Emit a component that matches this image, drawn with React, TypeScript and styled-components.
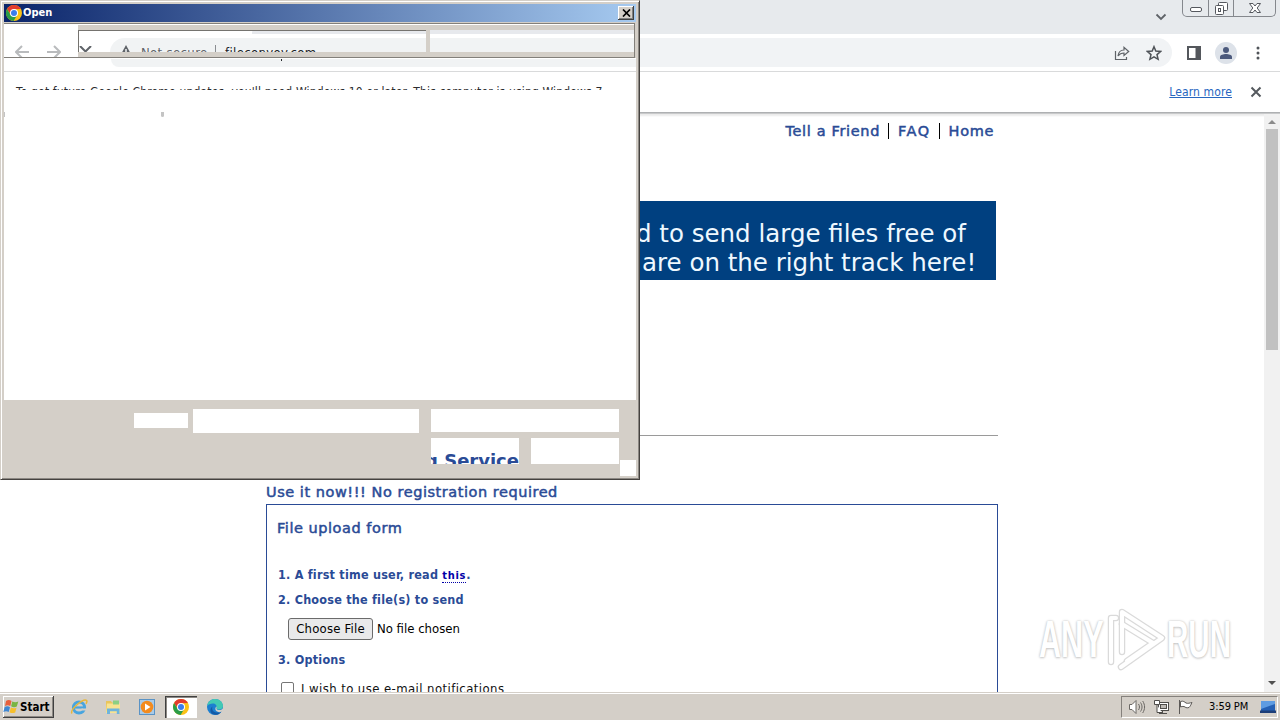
import styled, { createGlobalStyle } from "styled-components";

const FACE = "#d4cfc8";
const INK = "#2a4b96";

function ChromeLogo({ size }: { size: number }) {
  return (
    <svg width={size} height={size} viewBox="0 0 16 16">
      <circle cx="8" cy="8" r="8" fill="#fbc116" />
      <path d="M1.07 4A8 8 0 0 1 14.93 4L8 4.2 5 9.8Z" fill="#e33b2e" />
      <path d="M1.07 4A8 8 0 0 0 7.6 16L11.2 10 8 11.6 4.7 10Z" fill="#2a9d48" />
      <circle cx="8" cy="8" r="4" fill="#fff" />
      <circle cx="8" cy="8" r="3" fill="#3b7ded" />
    </svg>
  );
}

function TabStrip() {
  return (
    <TabStripStyle>
      <svg className="search" width="12" height="8" viewBox="0 0 12 8" fill="none" stroke="#5f6368" strokeWidth="1.8">
        <path d="M1.5 1.5 6 6l4.5-4.5" />
      </svg>
      <WindowButtons>
        <span>
          <svg width="14" height="16" viewBox="0 0 14 16" fill="#fff" stroke="#55585e">
            <rect x="1.5" y="7.5" width="11" height="4" rx="1.5" />
          </svg>
        </span>
        <span>
          <svg width="14" height="16" viewBox="0 0 14 16" fill="#fff" stroke="#55585e">
            <rect x="4.5" y="2.5" width="9" height="8" rx="1" />
            <rect x="1.5" y="5.5" width="8" height="9" rx="1" />
            <rect x="4.5" y="8.5" width="2" height="3" />
          </svg>
        </span>
        <span>
          <svg width="14" height="16" viewBox="0 0 14 16" fill="#fff" stroke="#55585e">
            <path d="M1.5 3.5h3.5L7 6l2-2.5h3.5L9.2 8l3.3 4.5H9L7 10l-2 2.5H1.5L4.8 8Z" />
          </svg>
        </span>
      </WindowButtons>
    </TabStripStyle>
  );
}

function Toolbar() {
  return (
    <ToolbarStyle>
      <Omnibox>
        <svg width="16" height="16" viewBox="0 0 16 16" fill="none" stroke="#5f6368" strokeWidth="1.2">
          <path d="M1.5 6v8.5h11V12" />
          <path d="M4 11c.5-4 2.5-6 6-6V2.3L14.7 6.5 10 10.5V8C7.5 8 5.6 8.8 4 11Z" />
        </svg>
        <svg width="16" height="16" viewBox="0 0 16 16" fill="none" stroke="#4f5358" strokeWidth="1.5">
          <path d="m8 1.7 1.8 4.4 4.7.4L11 9.6l1.1 4.7L8 11.8l-4.1 2.5L5 9.6 1.5 6.5l4.7-.4Z" />
        </svg>
      </Omnibox>
      <svg width="14" height="14" viewBox="0 0 14 14">
        <rect x="1" y="1" width="12" height="12" fill="#fff" stroke="#54575c" strokeWidth="2" />
        <path d="M8.5 1H13v12H8.5Z" fill="#54575c" />
      </svg>
      <Avatar>
        <svg width="12" height="12" viewBox="0 0 12 12" fill="#4c5a7d">
          <circle cx="6" cy="3" r="3" />
          <path d="M0 12V9.8C0 8 3.5 7 6 7s6 1 6 2.8V12Z" />
        </svg>
      </Avatar>
      <svg width="4" height="14" viewBox="0 0 4 14" fill="#505459">
        <circle cx="2" cy="2" r="1.5" />
        <circle cx="2" cy="7" r="1.5" />
        <circle cx="2" cy="12" r="1.5" />
      </svg>
    </ToolbarStyle>
  );
}

function Page() {
  return (
    <PageStyle>
      <Content>
        <Nav>
          <span>Tell a Friend</span>
          <span>FAQ</span>
          <span>Home</span>
        </Nav>
        <Banner>
          <p>d to send large files free of</p>
          <p>are on the right track here!</p>
        </Banner>
        <Rule />
        <Heading>Use it now!!! No registration required</Heading>
        <Form>
          <Heading as="h3">File upload form</Heading>
          <Step $top={27}>
            1. A first time user, read <a>this</a>.
          </Step>
          <Step $top={5}>2. Choose the file(s) to send</Step>
          <FileRow>
            <button>Choose File</button>
            <span>No file chosen</span>
          </FileRow>
          <Step $top={10}>3. Options</Step>
          <CheckRow>
            <i />
            <span>I wish to use e-mail notifications</span>
          </CheckRow>
        </Form>
      </Content>
      <Scrollbar>
        <svg width="8" height="4" viewBox="0 0 8 4" fill="#8b8b8b">
          <path d="M0 4 4 0l4 4Z" />
        </svg>
        <div />
        <svg width="8" height="4" viewBox="0 0 8 4" fill="#505050">
          <path d="M0 0h8L4 4Z" />
        </svg>
      </Scrollbar>
    </PageStyle>
  );
}

function OpenDialog() {
  return (
    <Dialog>
      <TitleBar>
        <ChromeLogo size={16} />
        <strong>Open</strong>
        <CloseButton>
          <svg width="9" height="8" viewBox="0 0 9 8" stroke="#000" strokeWidth="1.7">
            <path d="m1 .5 7 7M8 .5l-7 7" />
          </svg>
        </CloseButton>
      </TitleBar>
      <Rebar>
        <Arrows>
          <svg width="14" height="14" viewBox="0 0 14 14">
            <path d="M14 7H1.5M7 1 1 7l6 6" />
          </svg>
          <svg width="14" height="14" viewBox="0 0 14 14">
            <path d="M0 7h12.5M7 1l6 6-6 6" />
          </svg>
        </Arrows>
        <AddressBand>
          <svg width="13" height="8" viewBox="0 0 13 8" fill="none" stroke="#5f6368" strokeWidth="2">
            <path d="m1 0 5.5 5.5L12 0" />
          </svg>
          <AddressPill>
            <svg width="12" height="11" viewBox="0 0 12 11">
              <path d="M6 0 12 11H0Z" fill="#5f6368" />
              <path d="M6 4v7" stroke="#f1f3f4" strokeWidth="1.5" />
            </svg>
            <span className="state">Not secure</span>
            <span className="url">fileconvoy.com</span>
          </AddressPill>
        </AddressBand>
        <SearchBand />
      </Rebar>
      <Remains>
        <PillEdge>
          <i />
        </PillEdge>
        <Notice>
          To get future Google Chrome updates, you'll need Windows 10 or later. This computer is using Windows 7.
        </Notice>
        <Specks>
          <i />
          <i />
        </Specks>
      </Remains>
      <Footer>
        <Blank $w={54} $h={15} $top={13} $left={130} />
        <Blank $w={226} $h={24} $top={9} $left={5} />
        <FooterRight>
          <Blank $w={188} $h={23} />
          <div>
            <Blank $w={88} $h={26}>
              <b>g Service</b>
            </Blank>
            <Blank $w={88} $h={26} />
          </div>
        </FooterRight>
      </Footer>
      <Grip />
    </Dialog>
  );
}

function Taskbar() {
  return (
    <TaskbarStyle>
      <StartButton>
        <svg width="17" height="16" viewBox="0 0 17 16">
          <path d="M3 2c2-1.5 4-1 5.5 0L7.3 7C5.5 6 4 6 2 7Z" fill="#e8603c" />
          <path d="M9.3 2.5c2 1 4 1 6 0l-1.5 5c-2 1-4 .8-5.7-.2Z" fill="#79b543" />
          <path d="M1.7 8c2-1 3.7-.8 5.3.2L5.7 13C4 12 2.3 12 .3 13Z" fill="#3f87d2" />
          <path d="M7.9 8.5c2 1 3.7 1 5.6.2l-1.3 4.7c-2 1-4 .8-5.6-.2Z" fill="#f6bf2c" />
        </svg>
        Start
      </StartButton>
      <Launcher>
        <svg width="18" height="18" viewBox="0 0 18 18" fill="none">
          <circle cx="9" cy="9.5" r="5.6" stroke="#48a5df" strokeWidth="3" />
          <path d="M4.5 9.5H14" stroke="#48a5df" strokeWidth="2.2" />
          <path d="M11.5 11.5h5" stroke={FACE} strokeWidth="2" />
          <path d="M2 15.5C-.5 12 13 .2 16.5 2.3c.9.7.4 2-.5 3.5" stroke="#e8b73a" strokeWidth="1.5" />
        </svg>
      </Launcher>
      <Launcher>
        <svg width="18" height="18" viewBox="0 0 18 18">
          <path d="M2 3h5l1 1.5h7V14H2Z" fill="#e9c55b" />
          <path d="M3 5.5h13V15H2Z" fill="#f8e391" />
          <path d="M9 2.5h6v4H9Z" fill="#8ccf83" />
          <path d="M3 10.5h12.5V16h-2.7v-2.8H6V16H3Z" fill="#6fb4dc" />
        </svg>
      </Launcher>
      <Launcher>
        <svg width="18" height="18" viewBox="0 0 18 18">
          <rect x="1.5" y="1.5" width="15" height="15" fill="#a9cbe8" stroke="#5a93c5" />
          <circle cx="9" cy="9" r="6.3" fill="#f38b1e" />
          <path d="M7 5.5v7L12.5 9Z" fill="#fff" />
        </svg>
      </Launcher>
      <Launcher $active>
        <ChromeLogo size={16} />
      </Launcher>
      <Launcher>
        <svg width="18" height="18" viewBox="0 0 18 18">
          <circle cx="9" cy="9" r="8" fill="#1c7fd0" />
          <path d="M1.2 8C2 3 5.5 1 9 1c5 0 8 3.5 8 7 0 2.5-2 3.5-4 3.5-1.5 0-2.5-.5-2.5-1 .8-3-1-5-3.7-5C4.5 5.5 2 6.5 1.2 8Z" fill="#42c9b4" />
          <path d="M6.5 8.5c-1.5 4 2 7.5 8.5 5.5-2 3-6 3.5-8.5 2-3-2-2.5-6 0-7.5Z" fill="#145aa5" />
          <path d="M10.3 8.5c1 1-.5 2 .7 3 1.5 1 4 .8 6-1l.5 2.5-4 1.2C10 14 8 11 10.3 8.5Z" fill={FACE} />
        </svg>
      </Launcher>
      <Tray>
        <svg width="18" height="16" viewBox="0 0 18 16" fill="#fff" stroke="#6b6864">
          <path d="M1.5 5.5H4l4-4v13l-4-4H1.5Z" />
          <path d="M10.5 5c1.3 2 1.3 4 0 6M12.5 3.5c2 3 2 6 0 9M14.7 2c2.5 4 2.5 8 0 12" fill="none" />
        </svg>
        <svg width="17" height="16" viewBox="0 0 17 16" fill="#fff" stroke="#4f4d4a">
          <rect x="5.5" y="3.5" width="10" height="8" />
          <rect x="7.5" y="5.5" width="6" height="4" fill="#bebab5" />
          <path d="M1.5 1.5h5v4h-5ZM4 6v7.5h5M9.5 12v2.5M6 14.5h8" />
        </svg>
        <svg width="17" height="16" viewBox="0 0 17 16" fill="#fff" stroke="#5d5a57">
          <path d="M2.5 1v14" />
          <path d="M3.5 2.5c3-1 4 .5 5.5 1.5 2 .8 3.5 0 6-.5-1 2-1.5 3.5-3 5-3 1-3.5-.5-5-1-1.5-.3-2.5 0-3.5.5Z" />
        </svg>
        <time>3:59 PM</time>
        <svg width="16" height="13" viewBox="0 0 16 13">
          <path d="M1 0h14v10H1Z" fill="#2460b4" />
          <path d="M1 0h14v3L1 8Z" fill="#5e9ce2" />
          <path d="M0 9.5h16V12H0Z" fill="#1d3e78" />
        </svg>
      </Tray>
    </TaskbarStyle>
  );
}

function Watermark() {
  return (
    <WatermarkStyle>
      <Word $squeeze={0.6}>ANY</Word>
      <svg width="62" height="66" viewBox="0 0 62 66" fill="none" strokeLinejoin="round" strokeLinecap="round">
        <g stroke="#dadada" strokeWidth="6.5">
          <path d="M17 45V5l40 26-41 29" />
          <path d="M6 55V11h5M17 17l31 19-26 18" />
        </g>
        <g stroke="#fff" strokeWidth="4">
          <path d="M17 45V5l40 26-41 29" />
          <path d="M6 55V11h5M17 17l31 19-26 18" />
        </g>
      </svg>
      <Word $squeeze={0.58}>RUN</Word>
    </WatermarkStyle>
  );
}

function App() {
  return (
    <>
      <GlobalStyle />
      <Screen>
        <TabStrip />
        <Toolbar />
        <InfoBar>
          <a>Learn more</a>
          <svg width="12" height="12" viewBox="0 0 12 12" stroke="#55595e" strokeWidth="2">
            <path d="m1.5 1.5 9 9M10.5 1.5l-9 9" />
          </svg>
        </InfoBar>
        <Page />
        <Taskbar />
        <Watermark />
        <OpenDialog />
      </Screen>
    </>
  );
}

const GlobalStyle = createGlobalStyle`
  * {
    box-sizing: border-box;
  }

  body {
    margin: 0;
    overflow: hidden;
    background: #fff;
    font-family: "DejaVu Sans Condensed", "DejaVu Sans", sans-serif;
  }

  svg {
    display: block;
    flex: none;
  }

  p, h2, h3 {
    margin: 0;
    font-weight: normal;
  }
`;

const Screen = styled.div`
  position: relative;
  display: flex;
  flex-direction: column;
  width: 1280px;
  height: 720px;
  overflow: hidden;
  white-space: nowrap;
`;

const TabStripStyle = styled.div`
  display: flex;
  justify-content: flex-end;
  height: 34px;
  padding-right: 4px;
  background: #e7eaed;

  .search {
    margin: 13px 15px 0 0;
  }
`;

const WindowButtons = styled.div`
  display: flex;
  height: 17px;
  border: 1px solid #85888d;
  border-top: 0;
  border-radius: 0 0 5px 5px;

  span {
    display: flex;
    align-items: center;
    justify-content: center;
    width: 25px;
  }

  span + span {
    border-left: 1px solid #85888d;
  }

  span:last-child {
    width: 42px;
  }
`;

const ToolbarStyle = styled.div`
  display: flex;
  align-items: center;
  height: 38px;
  padding-right: 20px;
  background: #fff;
  border-bottom: 1px solid #d9dadb;
`;

const Omnibox = styled.div`
  display: flex;
  align-items: center;
  justify-content: flex-end;
  gap: 16px;
  width: 1061px;
  height: 29px;
  margin: 0 15px 0 111px;
  padding-right: 10px;
  border-radius: 15px;
  background: #f1f3f5;
`;

const Avatar = styled.div`
  display: flex;
  align-items: center;
  justify-content: center;
  width: 22px;
  height: 22px;
  margin: 0 auto 0 14px;
  border-radius: 50%;
  background: #dde2e9;
`;

const InfoBar = styled.div`
  display: flex;
  align-items: center;
  justify-content: flex-end;
  gap: 18px;
  height: 40px;
  padding-right: 18px;
  background: #fff;

  a {
    color: #2766bf;
    font: 12px/16px "DejaVu Sans Condensed", sans-serif;
    letter-spacing: 0.12px;
    text-decoration: underline;
  }
`;

const PageStyle = styled.div`
  display: flex;
  justify-content: space-between;
  height: 580px;
  padding-left: 266px;
  overflow: hidden;
  background: linear-gradient(#aeb0b2 0 1px, #c8c9ca 1px 2px, #ebebeb 2px 3px, #fff 5px);
`;

const Content = styled.div`
  width: 732px;
  padding-top: 8px;
`;

const Nav = styled.div`
  display: flex;
  justify-content: flex-end;
  align-items: center;
  height: 22px;
  padding-right: 4px;
  color: ${INK};
  font: 14.5px/16px "DejaVu Sans", sans-serif;
  letter-spacing: 0.65px;
  -webkit-text-stroke: 0.5px ${INK};

  span + span {
    margin-left: 8px;
    padding-left: 9px;
    border-left: 1px solid #000;
  }

  span:nth-child(2) {
    letter-spacing: 1.5px;
  }
`;

const Banner = styled.div`
  width: 730px;
  height: 79px;
  margin-top: 59px;
  padding: 18px 0 0 370px;
  background: #004080;
  color: #eef8ff;
  font: 24.5px/29px "DejaVu Sans", sans-serif;

  p + p {
    padding-left: 6px;
  }
`;

const Rule = styled.div`
  height: 1px;
  margin-top: 155px;
  background: #9a9a9a;
`;

const Heading = styled.h2`
  height: 20px;
  margin-top: 46px;
  color: ${INK};
  font: 14.5px/20px "DejaVu Sans", sans-serif;
  letter-spacing: 0.54px;
  -webkit-text-stroke: 0.5px ${INK};
`;

const Form = styled.div`
  height: 300px;
  margin-top: 2px;
  padding: 13px 0 0 11px;
  border: 1px solid ${INK};

  h3 {
    margin: 0 0 0 -1px;
  }
`;

const Step = styled.div<{ $top: number }>`
  height: 20px;
  margin-top: ${({ $top }) => $top}px;
  color: ${INK};
  font: bold 12.5px/20px "DejaVu Sans Condensed", sans-serif;
  letter-spacing: 0.22px;

  a {
    color: #0000a8;
    font-size: 11px;
    letter-spacing: 0.7px;
    border-bottom: 1px dotted #0000a8;
  }
`;

const FileRow = styled.div`
  display: flex;
  align-items: center;
  gap: 4px;
  margin: 8px 0 0 10px;
  font: 13px/20px "DejaVu Sans Condensed", sans-serif;

  button {
    width: 85px;
    height: 22px;
    padding: 0;
    border: 1px solid #6b6b6b;
    border-radius: 3px;
    background: #e9e9ea;
    color: #000;
    font: inherit;
    letter-spacing: 0.2px;
  }
`;

const CheckRow = styled.div`
  display: flex;
  align-items: center;
  gap: 7px;
  height: 18px;
  margin: 10px 0 0 3px;
  color: #111;
  font: 13px/18px "DejaVu Sans Condensed", sans-serif;
  letter-spacing: 0.42px;

  i {
    width: 13px;
    height: 13px;
    margin-top: -2px;
    border: 1px solid #767676;
    border-radius: 2px;
  }
`;

const Scrollbar = styled.div`
  display: flex;
  flex-direction: column;
  align-items: center;
  width: 16px;
  margin-top: 2px;
  padding: 6px 0 7px;
  background: #f1f1f1;

  div {
    width: 12px;
    height: 221px;
    margin: 5px 0 auto;
    background: #c1c1c1;
  }
`;

const Dialog = styled.div`
  position: absolute;
  left: 0;
  top: 0;
  display: flex;
  flex-direction: column;
  width: 640px;
  height: 480px;
  padding: 3px 3px 2px;
  border: 1px solid;
  border-color: ${FACE} #45423f #45423f ${FACE};
  background: ${FACE};
  box-shadow: inset 1px 1px #fff, inset -1px -1px #8c8883;
`;

const TitleBar = styled.div`
  display: flex;
  align-items: center;
  height: 18px;
  padding: 0 2px;
  background: linear-gradient(90deg, #0a246a, #a6caf0);
  color: #fff;

  strong {
    margin-left: 1px;
    font: bold 11px/18px "DejaVu Sans Condensed", sans-serif;
  }
`;

const CloseButton = styled.div`
  display: flex;
  align-items: center;
  justify-content: center;
  width: 16px;
  height: 14px;
  margin-left: auto;
  background: ${FACE};
  box-shadow: inset -1px -1px #404040, inset 1px 1px #fff, inset -2px -2px #808080;
`;

const Rebar = styled.div`
  display: flex;
  width: 631px;
  height: 35px;
  margin-top: 1px;
  border: solid #827f7a;
  border-width: 1px 1px 1px 0;
  background: ${FACE};
  box-shadow: inset 0 1px #fff;
`;

const Arrows = styled.div`
  display: flex;
  gap: 18px;
  width: 74px;
  padding: 21px 0 0 11px;
  overflow: hidden;
  background: #fff;

  path {
    fill: none;
    stroke: #b9bbbd;
    stroke-width: 2;
  }
`;

const AddressBand = styled.div`
  display: flex;
  width: 348px;
  height: 22px;
  margin-top: 6px;
  overflow: hidden;
  border: solid #75736f;
  border-width: 1px 0 0 1px;
  background: linear-gradient(100deg, transparent 49.8%, #e7e9ed 50%) 0 0 / 100% 3px no-repeat #fff;

  > svg {
    margin-top: 15px;
  }
`;

const AddressPill = styled.div`
  display: flex;
  width: 400px;
  height: 29px;
  flex: none;
  margin: 7px 0 0 18px;
  padding: 7px 0 0 10px;
  border-radius: 15px;
  background: #f1f3f4;
  font: 13px/16px "DejaVu Sans Condensed", sans-serif;
  letter-spacing: 0.35px;

  .state {
    width: 75px;
    margin-left: 9px;
    border-right: 1px solid #8a8d91;
    color: #5f6368;
  }

  .url {
    margin-left: 9px;
    color: #202124;
  }
`;

const SearchBand = styled.div`
  flex: 1;
  height: 22px;
  margin: 6px 0 0 4px;
  background: linear-gradient(#e7e9ed 0 4px, #fff 4px 8px, #f1f3f4 8px);
`;

const Remains = styled.div`
  width: 632px;
  height: 342px;
  background: #fff;
`;

const PillEdge = styled.div`
  height: 14px;
  padding: 1px 0 0 107px;
  overflow: hidden;
  border-bottom: 1px solid #d9dadb;

  i {
    display: block;
    height: 8px;
    border-radius: 0 0 0 15px;
    background: linear-gradient(#26282b, #26282b) 170px 0 / 1px 2px no-repeat #f1f3f4;
  }
`;

const Notice = styled.div`
  height: 18px;
  padding: 12px 0 0 12px;
  overflow: hidden;
  color: #2b2c2e;
  font: 12px/16px "DejaVu Sans Condensed", sans-serif;
  letter-spacing: 0.16px;
`;

const Specks = styled.div`
  display: flex;
  gap: 156px;
  padding-top: 22px;

  i {
    width: 1px;
    height: 5px;
    background: #c4c4c4;
  }

  i + i {
    width: 3px;
    border-radius: 0 0 2px 2px;
  }
`;

const Footer = styled.div`
  display: flex;
  height: 76px;
`;

const FooterRight = styled.div`
  display: flex;
  flex-direction: column;
  gap: 6px;
  margin: 9px 0 0 12px;

  > div:last-child {
    display: flex;
    gap: 12px;
  }
`;

const Blank = styled.div<{ $w: number; $h: number; $top?: number; $left?: number }>`
  display: flex;
  justify-content: flex-end;
  flex: none;
  width: ${({ $w }) => $w}px;
  height: ${({ $h }) => $h}px;
  margin: ${({ $top = 0, $left = 0 }) => `${$top}px 0 0 ${$left}px`};
  overflow: hidden;
  background: #fff;

  b {
    padding-top: 12px;
    color: ${INK};
    font: bold 18px/22px "DejaVu Sans", sans-serif;
    letter-spacing: 0;
  }
`;

const Grip = styled.div`
  position: absolute;
  right: 3px;
  bottom: 3px;
  width: 16px;
  height: 16px;
  background: #fff;
`;

const TaskbarStyle = styled.div`
  display: flex;
  height: 28px;
  padding: 4px 2px 2px 3px;
  background: ${FACE};
  box-shadow: inset 0 1px ${FACE}, inset 0 2px #fff;
`;

const StartButton = styled.div`
  display: flex;
  align-items: center;
  width: 51px;
  height: 22px;
  margin-right: 9px;
  box-shadow: inset -1px -1px #404040, inset 1px 1px #fff, inset -2px -2px #8d8984;
  color: #000;
  font: bold 11.5px/20px "DejaVu Sans Condensed", sans-serif;
`;

const Launcher = styled.div<{ $active?: boolean }>`
  display: flex;
  align-items: center;
  justify-content: center;
  width: 32px;
  height: 22px;
  margin-right: 2px;
  background: ${({ $active }) => ($active ? "#fff" : "none")};
  box-shadow: ${({ $active }) => ($active ? "inset 1px 1px #404040, inset 2px 2px #8d8984, inset -1px -1px #fff" : "none")};
`;

const Tray = styled.div`
  display: flex;
  align-items: center;
  gap: 7px;
  width: 157px;
  height: 22px;
  margin-left: auto;
  padding: 0 1px 0 6px;
  border: 1px solid;
  border-color: #85817c #fff #fff #85817c;

  time {
    margin: 0 auto 0 8px;
    color: #000;
    font: 11px/16px "DejaVu Sans Condensed", sans-serif;
    letter-spacing: -0.1px;
  }
`;

const WatermarkStyle = styled.div`
  position: absolute;
  left: 1039px;
  top: 607px;
  display: flex;
  align-items: center;
  width: 200px;
  height: 66px;
`;

const Word = styled.span<{ $squeeze: number }>`
  width: 66px;
  color: #fff;
  font: bold 51px/66px "Liberation Sans", sans-serif;
  text-shadow: 0 0 3px #bdbdbd, 0 1px 3px #cfcfcf;
  transform: scaleX(${({ $squeeze }) => $squeeze});
  transform-origin: left;
`;

export default App;
